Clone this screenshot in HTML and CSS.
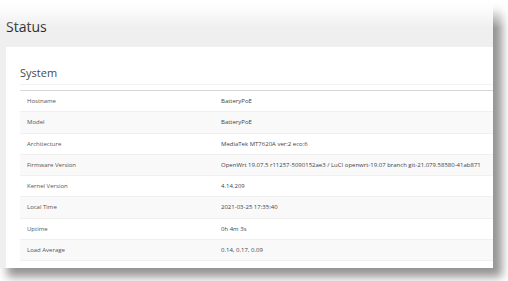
FILE: index.html
```html
<!DOCTYPE html>
<html lang="en">
<head>
    <meta charset="UTF-8">
    <title>Status - System</title>
    <link rel="stylesheet" href="styles.css">
</head>
<body>
    <div class="shot">
        <h2 class="page-title">Status</h2>
        <div class="card">
            <h3 class="card-title">System</h3>
            <div class="table">
                <div class="tr"><div class="td label">Hostname</div><div class="td">BatteryPoE</div></div>
                <div class="tr"><div class="td label">Model</div><div class="td">BatteryPoE</div></div>
                <div class="tr"><div class="td label">Architecture</div><div class="td">MediaTek MT7620A ver:2 eco:6</div></div>
                <div class="tr"><div class="td label">Firmware Version</div><div class="td">OpenWrt 19.07.5 r11257-5090152ae3 / LuCI openwrt-19.07 branch git-21.079.58580-41ab871</div></div>
                <div class="tr"><div class="td label">Kernel Version</div><div class="td">4.14.209</div></div>
                <div class="tr"><div class="td label">Local Time</div><div class="td">2021-03-25 17:35:40</div></div>
                <div class="tr"><div class="td label">Uptime</div><div class="td">0h 4m 3s</div></div>
                <div class="tr"><div class="td label">Load Average</div><div class="td">0.14, 0.17, 0.09</div></div>
            </div>
        </div>
    </div>
    <div class="fade"></div>
</body>
</html>
```

FILE: styles.css
```css
body {
    margin: 0;
    width: 508px;
    height: 281px;
    overflow: hidden;
    background: #ffffff;
    font-family: 'Open Sans', 'Noto Sans', sans-serif;
    color: #404040;
    position: relative;
}
.shot {
    width: 493px;
    height: 268px;
    background: #efefef;
    box-shadow: 8px 8px 9px 1px rgba(0,0,0,0.42);
    overflow: hidden;
}
.page-title {
    margin: 0;
    padding: 17px 0 0 6px;
    height: 30px;
    font-size: 14px;
    font-weight: normal;
    line-height: 19px;
    color: #2b2b2b;
    box-sizing: border-box;
}
.card {
    margin: 17px 0 0 6px;
    height: 221px;
    background: #ffffff;
    padding: 18px 0 0 14px;
    box-sizing: border-box;
}
.card-title {
    margin: 0 0 5px;
    height: 20px;
    font-size: 11px;
    font-weight: normal;
    line-height: 15px;
    color: #4a4a4a;
    border-bottom: 1px solid #f2f2f2;
    box-sizing: border-box;
}
.table {
    border-top: 1px solid #d8d8d8;
}
.tr {
    display: grid;
    grid-template-columns: 194px 1fr;
    height: 21.25px;
    align-items: center;
    border-bottom: 1px solid #f0f0f0;
    box-sizing: border-box;
}
.tr:nth-child(even) {
    background: #f9f9f9;
}
.td {
    padding-left: 7px;
    font-size: 6px;
    white-space: nowrap;
    color: #444;
}
.td.label {
    color: #555;
}
.fade {
    position: absolute;
    top: 0;
    left: 0;
    right: 0;
    height: 28px;
    background: linear-gradient(#ffffff 0%, rgba(255,255,255,0.8) 35%, rgba(255,255,255,0) 100%);
}
```
